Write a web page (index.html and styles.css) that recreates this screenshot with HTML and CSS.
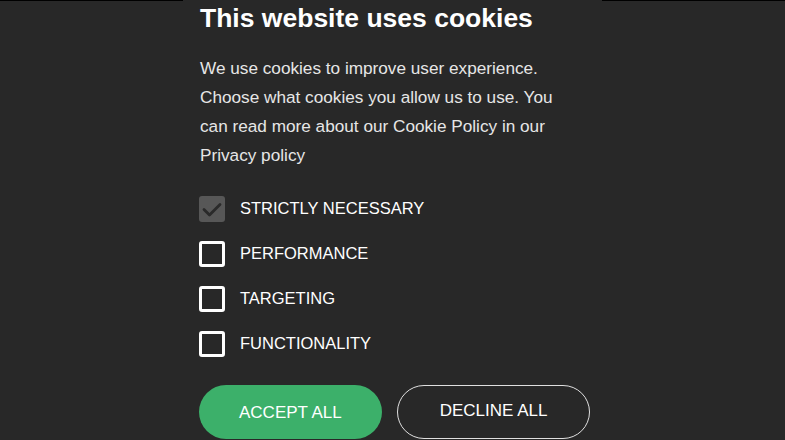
FILE: index.html
```html
<!DOCTYPE html>
<html lang="en">
<head>
<meta charset="utf-8">
<title>Cookies</title>
<link rel="stylesheet" href="styles.css">
</head>
<body>
<div class="topline"><span class="edge"></span><span class="gap"></span><span class="edge"></span></div>
<div class="panel">
  <h1 class="title">This website uses cookies</h1>
  <p class="intro">We use cookies to improve user experience. Choose what cookies you allow us to use. You can read more about our Cookie Policy in our Privacy policy</p>
  <ul class="options">
    <li class="option">
      <span class="box box-checked"><svg width="26" height="26" viewBox="0 0 26 26"><path d="M5 13.5l5.5 5.5 10.5-10.5" fill="none" stroke="#2a2a2a" stroke-width="2.8" stroke-linecap="round" stroke-linejoin="round"/></svg></span>
      <span class="label">STRICTLY NECESSARY</span>
    </li>
    <li class="option"><span class="box"></span><span class="label">PERFORMANCE</span></li>
    <li class="option"><span class="box"></span><span class="label">TARGETING</span></li>
    <li class="option"><span class="box"></span><span class="label">FUNCTIONALITY</span></li>
  </ul>
  <div class="actions">
    <button class="btn btn-accept">ACCEPT ALL</button>
    <button class="btn btn-decline">DECLINE ALL</button>
  </div>
</div>
</body>
</html>
```

FILE: styles.css
```css
html, body {
  margin: 0;
  padding: 0;
  background: #282828;
  overflow: hidden;
}
body {
  font-family: "Liberation Sans", Arial, sans-serif;
  color: #ffffff;
  height: 440px;
}
.topline {
  display: flex;
  height: 1px;
}
.topline .edge {
  flex: 1;
  background: #000;
}
.topline .gap {
  width: 419px;
}
.panel {
  width: 419px;
  margin: -1px auto 0;
  padding: 0 17px;
  box-sizing: border-box;
}
.title {
  margin: 0;
  font-size: 26.5px;
  line-height: 36px;
  font-weight: bold;
  color: #ffffff;
}
.intro {
  margin: 18px 0 0;
  padding-right: 14px;
  font-size: 17.2px;
  line-height: 28.9px;
  color: #e6e6e6;
}
.options {
  list-style: none;
  margin: 26px 0 0;
  padding: 0;
  display: flex;
  flex-direction: column;
  gap: 19px;
}
.option {
  display: flex;
  align-items: center;
  gap: 15px;
}
.box {
  width: 26px;
  height: 26px;
  box-sizing: border-box;
  border: 3px solid #ffffff;
  border-radius: 3px;
  flex: none;
  margin-left: -1px;
}
.box-checked {
  border: none;
  background: #575757;
  border-radius: 3px;
}
.box-checked svg {
  display: block;
}
.label {
  font-size: 16.5px;
  color: #ffffff;
}
.actions {
  display: flex;
  gap: 15px;
  margin-top: 28px;
  margin-left: -1px;
}
.btn {
  flex: none;
  white-space: nowrap;
  height: 54px;
  border-radius: 27px;
  font-family: "Liberation Sans", Arial, sans-serif;
  font-size: 17px;
  color: #ffffff;
  box-sizing: border-box;
  cursor: pointer;
}
.btn-accept {
  background: #3cb06a;
  border: none;
  padding: 3px 40px 0;
}
.btn-decline {
  background: transparent;
  border: 1px solid #e0e0e0;
  padding: 0 42px 2px;
}
```
